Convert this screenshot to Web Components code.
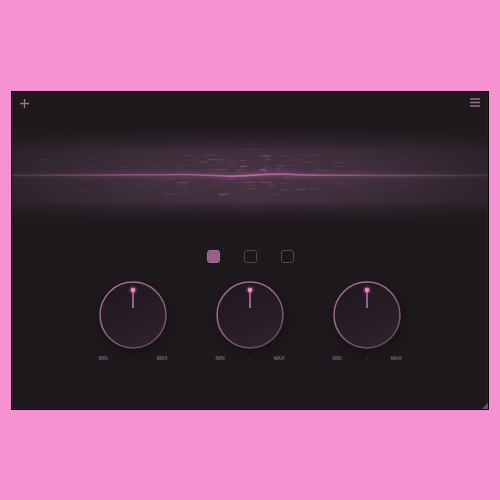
<!DOCTYPE html>
<html lang="en">
<head>
<meta charset="utf-8">
<meta name="viewport" content="width=device-width, initial-scale=1">
<title>Synth panel</title>
<style>
body{margin:0;min-height:100vh;display:grid;align-items:center;padding:0 11px;box-sizing:border-box;background:#f692d1;font-family:"Liberation Sans",Arial,sans-serif}
</style>
</head>
<body>
<plugin-window>
  <icon-button slot="bar" label="Add"><svg width="10" height="10" viewBox="0 0 10 10"><path d="M0 5.5h9M4.5 1v9" stroke="#a3758f" stroke-width="1.3" fill="none"/></svg></icon-button>
  <icon-button slot="bar" label="Menu"><svg width="10" height="10" viewBox="0 0 10 10"><path d="M0 1h10M0 4.5h10M0 8h10" stroke="#9a6f88" stroke-width="1.4" fill="none"/></svg></icon-button>
  <wave-display></wave-display>
  <preset-switch></preset-switch>
  <knob-row>
    <dial-knob name="Knob 1"></dial-knob>
    <dial-knob name="Knob 2"></dial-knob>
    <dial-knob name="Knob 3"></dial-knob>
  </knob-row>
</plugin-window>
<script>
class Base extends HTMLElement {
  constructor() { super(); this.attachShadow({mode: 'open'}); }
  connectedCallback() { this.shadowRoot.innerHTML = this.view(); }
}

customElements.define('plugin-window', class extends Base {
  view() { return `<style>
    :host{display:block;position:relative;background:#1e191d;border:1px solid #0d070b;box-shadow:inset 0 0 0 1px #2b1e28;padding-bottom:48px}
    header{display:flex;justify-content:space-between;align-items:flex-start;height:30px;padding:6px 8px 0}
    .grip{position:absolute;right:0;bottom:0;display:block}
  </style>
  <header><slot name="bar"></slot></header>
  <slot></slot>
  <svg class="grip" width="6" height="6" viewBox="0 0 7 7"><path d="M7 0v7H0z" fill="#5d4154"/><path d="M1 7l6-6M4 7l3-3" stroke="#98698b" fill="none"/></svg>`; }
});

customElements.define('icon-button', class extends Base {
  view() { return `<style>
    :host{display:block}
    button{display:block;margin:0;padding:0;border:0;background:none;cursor:pointer}
    ::slotted(svg){display:block}
  </style><button aria-label="${this.getAttribute('label')}"><slot></slot></button>`; }
});

customElements.define('wave-display', class extends Base {
  view() {
    let seed = 977;
    const rnd = () => (seed = (seed * 16807) % 2147483647) / 2147483647;
    const rows = [27, 31, 34, 38, 41, 50, 54, 57, 61, 66];
    let dashes = '';
    for (let i = 0; i < 170; i++) {
      const x = 234 + (rnd() + rnd() + rnd() - 1.5) * 270;
      const y = rows[Math.floor(rnd() * rows.length)] + rnd() * 1.4;
      const w = 3 + rnd() * 8;
      const o = (.08 + rnd() * .38) * Math.max(.15, 1 - Math.abs(x - 234) / 160);
      dashes += `<path d="M${x.toFixed(1)} ${y.toFixed(1)}q${(w / 2).toFixed(1)} -.5 ${w.toFixed(1)} ${(rnd() - .5).toFixed(1)}" opacity="${o.toFixed(2)}"/>`;
    }
    const line = 'M0 47.5C70 47.5 125 47 160 46.7C185 45.8 195 47.8 219 48.2C240 48 252 45.2 276 46.2C300 48 340 46.8 380 47.5L478 47.5';
    return `<style>:host{display:block} svg{display:block;width:100%;height:94px}</style>
    <svg viewBox="0 0 478 94" preserveAspectRatio="none" aria-hidden="true">
      <defs>
        <linearGradient id="v" x2="0" y2="1"><stop offset="0" stop-color="#fff" stop-opacity="0"/><stop offset=".12" stop-color="#fff" stop-opacity=".3"/><stop offset=".26" stop-color="#fff" stop-opacity=".8"/><stop offset=".5" stop-color="#fff"/><stop offset=".76" stop-color="#fff" stop-opacity=".85"/><stop offset=".89" stop-color="#fff" stop-opacity=".3"/><stop offset="1" stop-color="#fff" stop-opacity="0"/></linearGradient>
        <linearGradient id="h"><stop offset="0" stop-color="#2f262d"/><stop offset=".28" stop-color="#43313f"/><stop offset=".5" stop-color="#4b3447"/><stop offset=".72" stop-color="#43313f"/><stop offset="1" stop-color="#2f262d"/></linearGradient>
        <linearGradient id="l" gradientUnits="userSpaceOnUse" x1="0" y1="0" x2="478" y2="0"><stop offset="0" stop-color="#8b507e" stop-opacity=".3"/><stop offset=".3" stop-color="#98598b" stop-opacity=".85"/><stop offset=".5" stop-color="#b869a6"/><stop offset=".7" stop-color="#98598b" stop-opacity=".85"/><stop offset="1" stop-color="#8b507e" stop-opacity=".2"/></linearGradient>
        <mask id="m"><rect width="478" height="94" fill="url(#v)"/></mask>
        <filter id="b" filterUnits="userSpaceOnUse" x="0" y="25" width="478" height="45"><feGaussianBlur stdDeviation="2"/></filter>
      </defs>
      <rect width="478" height="94" fill="url(#h)" mask="url(#m)"/>
      <path d="M0 21.5h478M0 73.5h478" stroke="url(#l)" opacity=".1"/>
      <path d="M0 27.5h478M0 32.5h478M0 37.5h478M0 54.5h478M0 59.5h478M0 65.5h478" stroke="url(#l)" opacity=".05"/>
      <g stroke="#c091b2" stroke-width=".8" fill="none">${dashes}</g>
      <path d="${line}" stroke="url(#l)" stroke-width="5" fill="none" opacity=".35" filter="url(#b)"/>
      <path d="${line}" stroke="url(#l)" stroke-width="1.7" fill="none"/>
    </svg>`;
  }
});

customElements.define('preset-switch', class extends Base {
  view() { return `<style>
    :host{display:flex;justify-content:center;gap:24px;padding-top:28px}
    input{appearance:none;box-sizing:border-box;width:13px;height:13px;margin:0;border:1px solid #57424f;border-radius:3px;background:#1b161a;cursor:pointer}
    input:checked{background:#966089;border-color:#a46d94}
  </style>` + [1, 2, 3].map(n => `<input type="radio" name="preset" aria-label="Preset ${n}"${n === 1 ? ' checked' : ''}>`).join(''); }
});

customElements.define('knob-row', class extends Base {
  view() { return `<style>
    :host{display:grid;grid-template-columns:repeat(3,69px);gap:48px;justify-content:center;padding-top:18px}
  </style><slot></slot>`; }
});

customElements.define('dial-knob', class extends Base {
  view() { return `<style>
    :host{display:block}
    .dial{display:grid;justify-items:center}
    .dial>*{grid-area:1/1}
    svg{display:block;overflow:visible}
    input{width:68px;height:68px;margin:0;opacity:0;cursor:pointer}
    .scale{display:grid;grid-template-columns:1fr auto 1fr;padding-top:6px;font-size:5px;line-height:6px;color:#a37c95}
    .scale :last-child{text-align:right}
  </style>
  <div class="dial">
    <svg width="68" height="68" viewBox="0 0 68 68" aria-hidden="true">
      <defs>
        <linearGradient id="f" x2=".5" y2="1"><stop offset="0" stop-color="#1e181d"/><stop offset=".5" stop-color="#251c23"/><stop offset="1" stop-color="#2d212a"/></linearGradient>
        <linearGradient id="r" x1=".2" x2=".8" y2="1"><stop offset="0" stop-color="#a96b95"/><stop offset=".45" stop-color="#976588"/><stop offset="1" stop-color="#634759"/></linearGradient>
        <radialGradient id="g"><stop offset="0" stop-color="#e46fb8" stop-opacity=".75"/><stop offset="1" stop-color="#c55a9c" stop-opacity="0"/></radialGradient>
        <radialGradient id="s"><stop offset=".65" stop-color="#0c080b" stop-opacity=".35"/><stop offset="1" stop-color="#0c080b" stop-opacity="0"/></radialGradient>
      </defs>
      <circle cx="36" cy="39" r="46" fill="url(#s)"/>
      <circle cx="34" cy="34" r="33" fill="url(#f)" stroke="url(#r)" stroke-width="1.5"/>
      <path d="M34 9v18" stroke="#99608a" stroke-width="2"/>
      <circle cx="34" cy="9" r="5" fill="url(#g)"/>
      <circle cx="34" cy="9" r="2.3" fill="#e98ac9"/>
    </svg>
    <input type="range" min="0" max="100" value="50" aria-label="${this.getAttribute('name')}">
  </div>
  <div class="scale"><span>MIN</span><span>-</span><span>MAX</span></div>`; }
});
</script>
</body>
</html>
